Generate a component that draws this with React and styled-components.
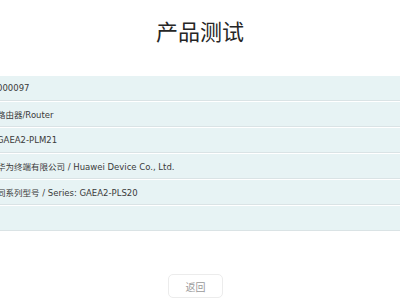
import styled, { createGlobalStyle } from "styled-components";

const GlobalStyle = createGlobalStyle`
    html, body {
        margin: 0;
        padding: 0;
        background: #ffffff;
        overflow: hidden;
    }
    body {
        font-family: "DejaVu Sans", "Noto Sans CJK SC", sans-serif;
    }
`;

const Page = styled.div`
    width: 400px;
    height: 300px;
    display: flex;
    flex-direction: column;
    align-items: center;
`;

const Title = styled.h1`
    margin: 14px 0 0;
    height: 32px;
    line-height: 32px;
    font-size: 22px;
    font-weight: 400;
    color: #262626;
    font-family: "Noto Sans CJK SC", sans-serif;
`;

const Table = styled.div`
    align-self: stretch;
    margin: 30px -10px 0;
    display: flex;
    flex-direction: column;
`;

const Row = styled.div`
    height: 24px;
    display: flex;
    align-items: center;
    padding-left: 7px;
    background-color: #e7f3f4;
    border-bottom: 1px solid #dae3e5;
    margin-bottom: 1px;
    font-size: 8.5px;
    color: #3a3a3a;
    white-space: nowrap;
`;

const BackButton = styled.button`
    margin-top: auto;
    margin-bottom: 2px;
    margin-right: 9px;
    width: 55px;
    height: 24px;
    background: #ffffff;
    border: 1px solid #ececec;
    border-radius: 5px;
    font-family: "Noto Sans CJK SC", sans-serif;
    font-size: 10px;
    color: #9a9a9a;
    padding: 0;
`;

const rows = [
    "000097",
    "路由器/Router",
    "GAEA2-PLM21",
    "华为终端有限公司 / Huawei Device Co., Ltd.",
    "同系列型号 / Series:  GAEA2-PLS20",
    "",
];

function App() {
    return (
        <>
            <GlobalStyle />
            <Page>
                <Title>产品测试</Title>
                <Table>
                    {rows.map((text, i) => (
                        <Row key={i}>{text}</Row>
                    ))}
                </Table>
                <BackButton>返回</BackButton>
            </Page>
        </>
    );
}

export default App;
